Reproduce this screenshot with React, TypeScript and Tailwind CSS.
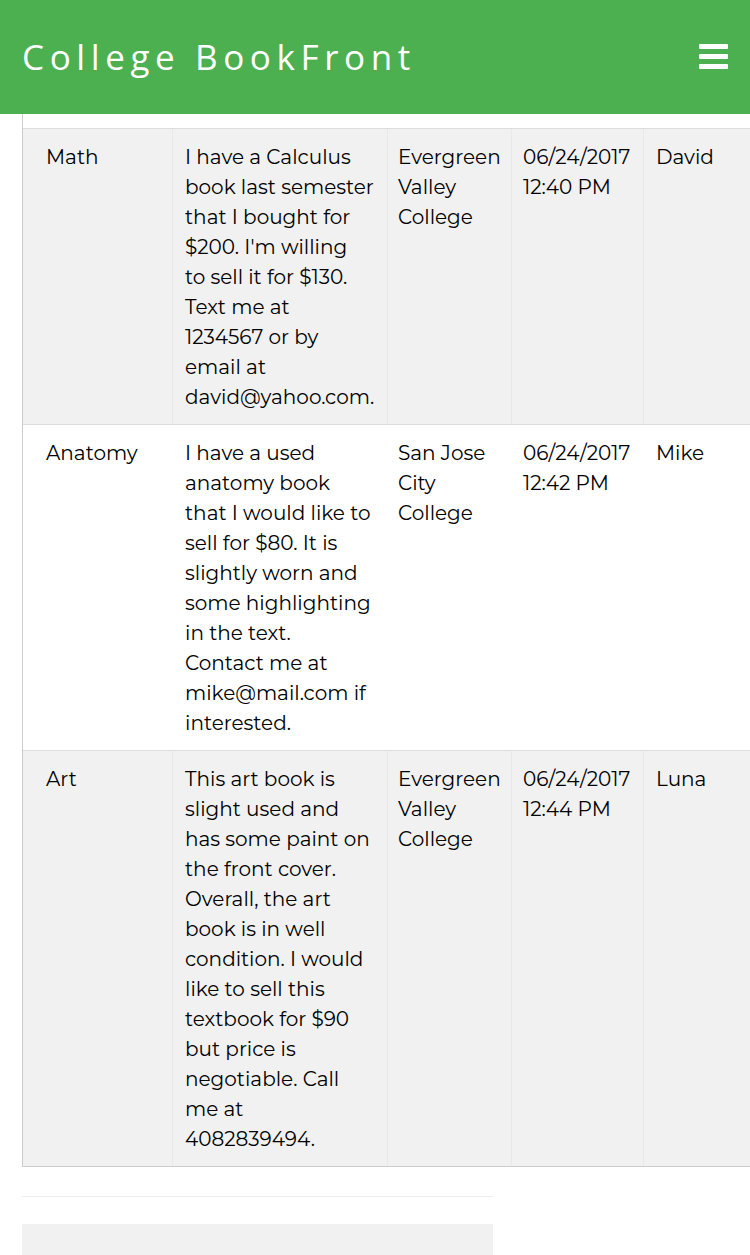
import React from 'react';

type Post = {
  subject: string;
  lines: string[];
  college: string[];
  date: string;
  time: string;
  name: string;
};

const posts: Post[] = [
  {
    subject: 'Math',
    lines: [
      'I have a Calculus',
      'book last semester',
      'that I bought for',
      "$200. I'm willing",
      'to sell it for $130.',
      'Text me at',
      '1234567 or by',
      'email at',
      'david@yahoo.com.',
    ],
    college: ['Evergreen', 'Valley', 'College'],
    date: '06/24/2017',
    time: '12:40 PM',
    name: 'David',
  },
  {
    subject: 'Anatomy',
    lines: [
      'I have a used',
      'anatomy book',
      'that I would like to',
      'sell for $80. It is',
      'slightly worn and',
      'some highlighting',
      'in the text.',
      'Contact me at',
      'mike@mail.com if',
      'interested.',
    ],
    college: ['San Jose', 'City', 'College'],
    date: '06/24/2017',
    time: '12:42 PM',
    name: 'Mike',
  },
  {
    subject: 'Art',
    lines: [
      'This art book is',
      'slight used and',
      'has some paint on',
      'the front cover.',
      'Overall, the art',
      'book is in well',
      'condition. I would',
      'like to sell this',
      'textbook for $90',
      'but price is',
      'negotiable. Call',
      'me at',
      '4082839494.',
    ],
    college: ['Evergreen', 'Valley', 'College'],
    date: '06/24/2017',
    time: '12:44 PM',
    name: 'Luna',
  },
];

function Lines({ items }: { items: string[] }) {
  return (
    <>
      {items.map((l, i) => (
        <div key={i} className="whitespace-nowrap">
          {l}
        </div>
      ))}
    </>
  );
}

export default function App() {
  return (
    <div className="w-[750px] h-[1255px] overflow-hidden bg-white text-black font-['Montserrat','Noto_Sans','DejaVu_Sans',sans-serif]">
      {/* Header */}
      <header className="h-[114px] bg-[#4caf50] flex items-center justify-between pl-[22px] pr-[22px]">
        <h1 className="text-[35px] font-normal text-white tracking-[5.6px] font-['Open_Sans',sans-serif] leading-none -mt-[2px]">
          College BookFront
        </h1>
        <div className="flex flex-col gap-[5px] w-[29px] mb-[1px]">
          <span className="block h-[5px] bg-white rounded-[1px]" />
          <span className="block h-[5px] bg-white rounded-[1px]" />
          <span className="block h-[5px] bg-white rounded-[1px]" />
        </div>
      </header>

      {/* Table */}
      <div className="ml-[22px] border-l border-b border-[#cccccc] text-[20px] leading-[30px]">
        <div className="h-[15px] border-b border-[#dddddd] bg-white" />
        {posts.map((p, i) => {
          const grey = i % 2 === 0;
          const line = grey ? 'border-[#e9e9e9]' : 'border-white';
          return (
            <div
              key={p.subject}
              className={`grid grid-cols-[150px_215px_124px_132px_1fr] border-b last:border-b-0 border-[#dddddd] ${grey ? 'bg-[#f1f1f1]' : 'bg-white'}`}
            >
              <div className={`pl-[23px] pr-[12px] pt-[13px] pb-[12px] border-r ${line}`}>{p.subject}</div>
              <div className={`px-[12px] pt-[13px] pb-[12px] border-r ${line}`}>
                <Lines items={p.lines} />
              </div>
              <div className={`px-[10px] pt-[13px] pb-[12px] border-r ${line}`}>
                <Lines items={p.college} />
              </div>
              <div className={`px-[11px] pt-[13px] pb-[12px] border-r ${line}`}>
                <div className="whitespace-nowrap">{p.date}</div>
                <div className="whitespace-nowrap">{p.time}</div>
              </div>
              <div className="px-[12px] pt-[13px] pb-[12px]">{p.name}</div>
            </div>
          );
        })}
      </div>

      {/* Footer */}
      <div className="w-[471px] ml-[22px] mt-[29px] border-t border-[#eeeeee]" />
      <div className="w-[471px] ml-[22px] mt-[27px] h-[60px] bg-[#f1f1f1]" />
    </div>
  );
}
